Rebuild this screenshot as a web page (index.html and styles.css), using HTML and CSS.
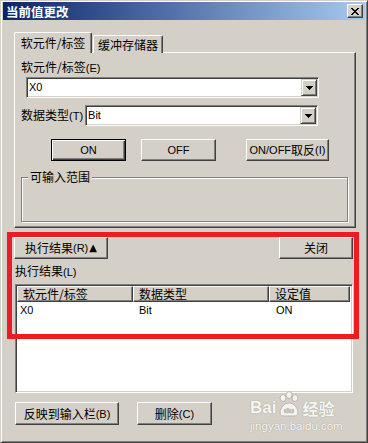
FILE: index.html
```html
<!DOCTYPE html>
<html lang="zh-CN">
<head>
<meta charset="utf-8">
<title>当前值更改</title>
<link rel="stylesheet" href="styles.css">
</head>
<body>
<div class="window">
  <div class="titlebar">
    <span class="title">当前值更改</span>
    <span class="close">
      <svg width="8" height="7" viewBox="0 0 8 7"><path d="M0 0h2v1H0zM6 0h2v1H6zM1 1h2v1H1zM5 1h2v1H5zM2 2h4v1H2zM3 3h2v1H3zM2 4h4v1H2zM1 5h2v1H1zM5 5h2v1H5zM0 6h2v1H0zM6 6h2v1H6z" fill="#000"/></svg>
    </span>
  </div>
  <div class="body">
    <div class="tabs">
      <div class="tab active"><span class="c">软元件/标签</span></div>
      <div class="tab"><span class="c">缓冲存储器</span></div>
    </div>
    <div class="panel">
      <div class="label"><span class="c">软元件/标签</span>(E)</div>
      <div class="combo wide">
        <span class="val">X0</span>
        <span class="drop"><svg width="7" height="4" viewBox="0 0 7 4"><path d="M0 0h7v1H0zM1 1h5v1H1zM2 2h3v1H2zM3 3h1v1H3z" fill="#000"/></svg></span>
      </div>
      <div class="typerow">
        <span class="label"><span class="c">数据类型</span>(T)</span>
        <div class="combo narrow">
          <span class="val">Bit</span>
          <span class="drop"><svg width="7" height="4" viewBox="0 0 7 4"><path d="M0 0h7v1H0zM1 1h5v1H1zM2 2h3v1H2zM3 3h1v1H3z" fill="#000"/></svg></span>
        </div>
      </div>
      <div class="btnrow">
        <button class="btn def w75">ON</button>
        <button class="btn w75 off">OFF</button>
        <button class="btn w83 inv">ON/OFF<span class="c">取反</span>(I)</button>
      </div>
      <div class="group">
        <span class="legend"><span class="c">可输入范围</span></span>
      </div>
    </div>
    <div class="resultbar">
      <button class="btn w94"><span class="c">执行结果</span>(R)<span class="tri">▲</span></button>
      <button class="btn w74"><span class="c">关闭</span></button>
    </div>
    <div class="label result"><span class="c">执行结果</span>(L)</div>
    <div class="list">
      <div class="lhead">
        <div class="hc col1"><span class="c">软元件/标签</span></div>
        <div class="hc col2"><span class="c">数据类型</span></div>
        <div class="hc col3"><span class="c">设定值</span></div>
      </div>
      <div class="lrow">
        <span class="cell col1">X0</span>
        <span class="cell col2">Bit</span>
        <span class="cell col3">ON</span>
      </div>
    </div>
    <div class="bottom">
      <button class="btn w104 tall"><span class="c">反映到输入栏</span>(B)</button>
      <button class="btn w75 tall"><span class="c">删除</span>(C)</button>
    </div>
  </div>
  <div class="watermark">
    <div class="wm-top"><span class="wm-bai">Bai</span><svg class="paw" width="26" height="26" viewBox="0 0 26 26"><g fill="#f4f3f0" stroke="#b9b6b0" stroke-width="1"><ellipse cx="7" cy="7" rx="3" ry="3.5"/><ellipse cx="13" cy="4" rx="3" ry="3.5"/><ellipse cx="19" cy="7" rx="3" ry="3.5"/><path d="M4 22c0-6 5-10 9-10s9 4 9 10c0 2-2 3-4 3H8c-2 0-4-1-4-3z"/></g><text x="13" y="22" text-anchor="middle" font-family="Liberation Sans, sans-serif" font-size="8" font-weight="bold" fill="#c9c6c0">du</text></svg><span class="wm-jy">经验</span></div>
    <div class="wm-url">jingyan.baidu.com</div>
  </div>
  <div class="redbox"></div>
</div>
</body>
</html>
```

FILE: styles.css
```css
* { box-sizing: border-box; }
html, body { margin: 0; padding: 0; }
body {
  width: 368px;
  height: 443px;
  overflow: hidden;
  background: #D4D0C8;
  font-family: "Liberation Sans", "Noto Sans CJK SC", sans-serif;
  font-size: 11px;
  color: #000;
}
.c { font-size: 12px; font-family: "Noto Sans CJK SC", sans-serif; }

.window {
  position: relative;
  width: 368px;
  height: 443px;
  background: #D4D0C8;
  border: 1px solid;
  border-color: #D4D0C8 #404040 #404040 #D4D0C8;
  box-shadow: inset 1px 1px #fff, inset -1px -1px #808080;
  padding: 1px 2px 2px 2px;
}

.titlebar {
  height: 18px;
  background: linear-gradient(to right, #0A246A, #A6CAF0);
  display: flex;
  align-items: center;
  padding: 0 2px 0 2px;
}
.title {
  color: #fff;
  font-family: "Noto Sans CJK SC", sans-serif;
  font-weight: bold;
  font-size: 12.5px;
  line-height: 18px;
  margin-left: 1px;
  margin-top: 1px;
}
.close {
  margin-left: auto;
  width: 16px;
  height: 14px;
  background: #D4D0C8;
  border: 1px solid;
  border-color: #fff #404040 #404040 #fff;
  box-shadow: inset -1px -1px #808080;
  display: flex;
  align-items: center;
  justify-content: center;
  padding-right: 1px;
}
.close svg { display: block; }

.body {
  padding: 13px 0 0 11px;
}

.tabs {
  display: flex;
  align-items: flex-end;
  height: 20px;
  margin-bottom: -1px;
}
.tab {
  position: relative;
  height: 18px;
  background: #D4D0C8;
  border: 1px solid;
  border-bottom: none;
  border-color: #fff #404040 #fff #fff;
  border-radius: 2px 2px 0 0;
  box-shadow: inset -1px 0 #808080;
  display: flex;
  justify-content: center;
  line-height: 16px;
  padding-top: 1px;
}
.tab.active {
  width: 78px;
  height: 21px;
  z-index: 1;
  padding-top: 2px;
}
.tab:not(.active) { width: 70px; margin-left: 1px; }

.panel {
  width: 342px;
  height: 176px;
  border: 1px solid;
  border-color: #fff #404040 #404040 #fff;
  box-shadow: inset -1px -1px #808080;
  padding: 6px 6px 0 6px;
  display: flex;
  flex-direction: column;
}
.label { line-height: 16px; white-space: nowrap; }
.combo {
  display: flex;
  height: 21px;
  background: #fff;
  border: 1px solid;
  border-color: #808080 #fff #fff #808080;
  box-shadow: inset 1px 1px #404040, inset -1px -1px #D4D0C8;
  padding: 1px;
}
.combo.wide { width: 293px; margin-left: 5px; margin-top: 1px; }
.combo.narrow { width: 233px; }
.combo .val { flex: 1; padding-left: 1px; line-height: 17px; }
.drop {
  width: 16px;
  height: 17px;
  background: #D4D0C8;
  border: 1px solid;
  border-color: #D4D0C8 #404040 #404040 #D4D0C8;
  box-shadow: inset 1px 1px #fff, inset -1px -1px #808080;
  display: flex;
  align-items: center;
  justify-content: center;
}
.drop svg { display: block; }
.typerow {
  display: flex;
  align-items: center;
  gap: 2px;
  margin-top: 7px;
}

.btn {
  font: inherit;
  color: #000;
  background: #D4D0C8;
  border: 1px solid;
  border-color: #fff #404040 #404040 #fff;
  box-shadow: inset -1px -1px #808080;
  padding: 0;
  margin: 0;
  height: 22px;
  display: flex;
  align-items: center;
  justify-content: center;
  line-height: 16px;
  white-space: nowrap;
}
.btn.def {
  border-color: #000;
  box-shadow: inset 1px 1px #fff, inset -1px -1px #404040, inset -2px -2px #808080;
}
.btn.tall { height: 23px; }
.w75 { width: 75px; }
.w83 { width: 83px; }
.w94 { width: 94px; }
.w74 { width: 74px; }
.w104 { width: 104px; }
.tri { font-family: "DejaVu Sans", sans-serif; font-size: 10px; margin-left: 1px; }

.btnrow {
  display: flex;
  margin: 13px 0 0 30px;
}
.btnrow .off { margin-left: 15px; }
.btnrow .inv { margin-left: 30px; }

.group {
  position: relative;
  width: 327px;
  height: 45px;
  margin-top: 16px;
  border: 1px solid #808080;
  border-right-color: #808080;
  box-shadow: inset 1px 1px #fff, 1px 1px #fff;
}
.legend {
  position: absolute;
  left: 6px;
  top: -9px;
  background: #D4D0C8;
  padding: 0 2px 0 2px;
  line-height: 16px;
}

.resultbar {
  display: flex;
  justify-content: space-between;
  width: 339px;
  margin-top: 9px;
}
.label.result { margin: 3px 0 0 1px; line-height: 18px; }

.list {
  width: 338px;
  height: 109px;
  margin: 3px 0 0 1px;
  background: #fff;
  border: 1px solid;
  border-color: #808080 #fff #fff #808080;
  box-shadow: inset 1px 1px #404040, inset -1px -1px #D4D0C8;
  padding: 1px;
}
.lhead { display: flex; height: 16px; }
.hc {
  height: 16px;
  background: #D4D0C8;
  border: 1px solid;
  border-color: #fff #404040 #404040 #fff;
  box-shadow: inset -1px -1px #808080;
  line-height: 13px;
  padding-left: 5px;
  white-space: nowrap;
  overflow: hidden;
}
.hc.col1 { width: 116px; }
.hc.col2 { width: 136px; }
.hc.col3 { width: 81px; }
.lrow { display: flex; height: 17px; line-height: 17px; }
.cell.col1 { width: 116px; padding-left: 3px; }
.cell.col2 { width: 136px; padding-left: 6px; }
.cell.col3 { width: 81px; padding-left: 7px; }

.bottom {
  display: flex;
  gap: 18px;
  margin: 9px 0 0 1px;
}

.watermark {
  position: absolute;
  left: 249px;
  top: 387px;
  color: #f6f5f2;
  text-shadow: 0 0 1px #a9a6a0, 0 0 1px #a9a6a0;
}
.wm-top { display: flex; align-items: flex-end; height: 30px; }
.wm-bai { font-family: "Liberation Sans", sans-serif; font-weight: bold; font-size: 17px; line-height: 20px; }
.paw { display: block; margin: 0 0 1px 0; }
.wm-jy { font-family: "Noto Sans CJK SC", sans-serif; font-weight: bold; font-size: 16px; line-height: 20px; }
.wm-url { font-family: "Liberation Sans", sans-serif; font-size: 11.5px; line-height: 14px; margin-top: 1px; }

.redbox {
  position: absolute;
  left: 6px;
  top: 231px;
  width: 352px;
  height: 107px;
  border: 5px solid #ED1C24;
}
```
